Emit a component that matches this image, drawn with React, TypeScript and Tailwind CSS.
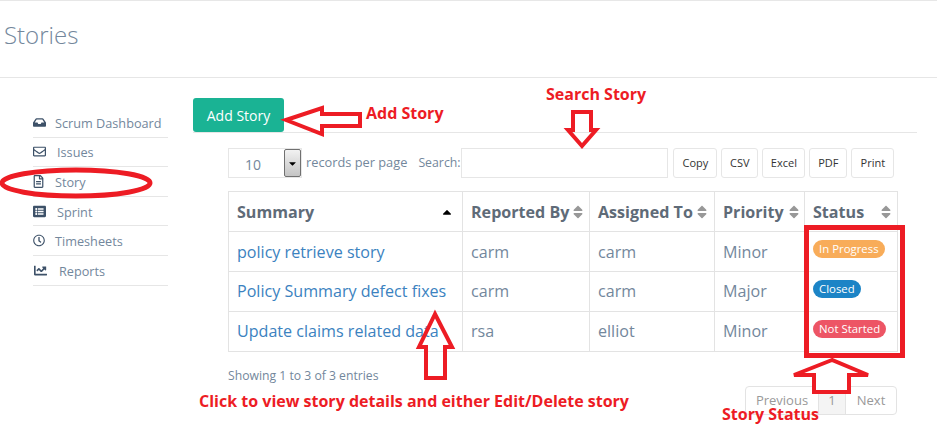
import { FaInbox, FaRegEnvelope, FaRegFileAlt, FaListAlt, FaRegClock, FaChartLine, FaSort, FaCaretUp, FaCaretDown } from 'react-icons/fa'

const NAV = [
  { icon: FaInbox, label: 'Scrum Dashboard', gap: 'ml-[9px]', size: 'w-[13px]' },
  { icon: FaRegEnvelope, label: 'Issues', gap: 'ml-[11px]', size: 'w-[13px]' },
  { icon: FaRegFileAlt, label: 'Story', gap: 'ml-[11px]', size: 'w-[11px]' },
  { icon: FaListAlt, label: 'Sprint', gap: 'ml-[11px]', size: 'w-[13px]' },
  { icon: FaRegClock, label: 'Timesheets', gap: 'ml-[10px]', size: 'w-[12px]' },
  { icon: FaChartLine, label: 'Reports', gap: 'ml-[11px]', size: 'w-[15px]' },
]

const ROWS = [
  { summary: 'policy retrieve story', by: 'carm', to: 'carm', priority: 'Minor', status: 'In Progress', color: 'bg-[#f8ac59]', pad: 'pt-[2px]' },
  { summary: 'Policy Summary defect fixes', by: 'carm', to: 'carm', priority: 'Major', status: 'Closed', color: 'bg-[#1c84c6]', pad: 'pb-0' },
  { summary: 'Update claims related data', by: 'rsa', to: 'elliot', priority: 'Minor', status: 'Not Started', color: 'bg-[#ed5565]', pad: 'pb-0' },
]

const EXPORTS = [
  { label: 'Copy', width: 'w-[44px]' },
  { label: 'CSV', width: 'w-[37px]' },
  { label: 'Excel', width: 'w-[43px]' },
  { label: 'PDF', width: 'w-[38px]' },
  { label: 'Print', width: 'w-[43px]' },
]

function SortHead({ label, width, pad }: { label: string; width: string; pad: string }) {
  return (
    <th className={`${width} border border-[#e3e3e3] pl-[8px] pt-[2px] ${pad} text-left font-bold`}>
      <div className="flex items-center justify-between">
        <span>{label}</span>
        <FaSort className="text-[16px] text-[#989898]" />
      </div>
    </th>
  )
}

export default function App() {
  return (
    <div className="relative h-[436px] w-[937px] overflow-hidden border-t border-[#e7e7e7] bg-white font-['Open_Sans',sans-serif] text-[#73879c]">
      <header className="flex h-[77px] items-center border-b border-[#e6e6e6] pb-[9px] pl-[4px]">
        <h1 className="text-[24px] font-light text-[#73879c]">Stories</h1>
      </header>

      <div className="flex">
        <nav className="ml-[33px] mt-[30px] w-[135px] text-[12.7px]">
          {NAV.map((item) => (
            <div key={item.label} className="flex h-[29.6px] items-center border-b border-[#e6e6e6]">
              <item.icon className={`${item.size} shrink-0 text-[13px] text-[#3d5168]`} />
              <span className={`${item.gap} whitespace-nowrap pt-[2px]`}>{item.label}</span>
            </div>
          ))}
        </nav>

        <main className="ml-[25px] mt-[20px] w-[724px]">
          <div className="border-b border-[#e6e6e6]">
            <button className="block h-[34px] w-[91px] rounded-[3px] bg-[#1ab394] text-[14px] text-white">Add Story</button>
          </div>

          <div className="ml-[35px] mt-[15px] flex h-[30px] items-center text-[12.8px]">
            <div className="flex h-[30px] w-[74px] items-center justify-between border border-[#e6e6e6] pl-[16px]">
              <span className="pt-[3px] text-[14px]">10</span>
              <span className="flex h-[28px] w-[17px] items-center justify-center rounded-[2px] border border-[#707070] bg-gradient-to-b from-[#f2f2f2] to-[#c4c4c4]">
                <FaCaretDown className="text-[11px] text-black" />
              </span>
            </div>
            <span className="ml-[4px] whitespace-nowrap">records per page</span>
            <span className="ml-[11px] w-[43px] text-[12.3px]">Search:</span>
            <input className="h-[30px] w-[207px] border border-[#e6e6e6] outline-none" />
            <div className="ml-[5px] flex gap-[4px]">
              {EXPORTS.map((b) => (
                <button key={b.label} className={`${b.width} h-[30px] rounded-[3px] border border-[#e6e6e6] bg-white text-[11px] text-[#333]`}>
                  {b.label}
                </button>
              ))}
            </div>
          </div>

          <table className="ml-[35px] mt-[13px] w-[670px] table-fixed border-collapse text-[16.1px]">
            <thead>
              <tr className="h-[40px] text-[#5f6b78]">
                <th className="w-[234px] border border-[#e3e3e3] pl-[8px] pr-[8px] pt-[2px] text-left font-bold">
                  <div className="flex items-center justify-between">
                    <span>Summary</span>
                    <FaCaretUp className="text-[14px] text-black" />
                  </div>
                </th>
                <SortHead label="Reported By" width="w-[127px]" pad="pr-[3px]" />
                <SortHead label="Assigned To" width="w-[125px]" pad="pr-[4px]" />
                <SortHead label="Priority" width="w-[90px]" pad="pr-[2px]" />
                <SortHead label="Status" width="w-[93px]" pad="pr-[3px]" />
              </tr>
            </thead>
            <tbody>
              {ROWS.map((row) => (
                <tr key={row.summary} className="h-[40px]">
                  <td className={`${row.pad} whitespace-nowrap border border-[#e3e3e3] pl-[8px] text-[#3b82c0]`}>{row.summary}</td>
                  <td className={`${row.pad} border border-[#e3e3e3] pl-[8px]`}>{row.by}</td>
                  <td className={`${row.pad} border border-[#e3e3e3] pl-[8px]`}>{row.to}</td>
                  <td className={`${row.pad} border border-[#e3e3e3] pl-[8px]`}>{row.priority}</td>
                  <td className="border border-[#e3e3e3] pl-[8px]">
                    <span className={`${row.color} mb-[10px] inline-block h-[18px] rounded-full px-[6px] text-[11.4px] leading-[18px] text-white`}>{row.status}</span>
                  </td>
                </tr>
              ))}
            </tbody>
          </table>

          <div className="ml-[35px] flex items-start justify-between">
            <p className="mt-[15px] text-[12.2px]">Showing 1 to 3 of 3 entries</p>
            <div className="mr-[20px] mt-[34px] flex h-[29px] rounded-[4px] border border-[#e3e3e3] text-[13px] text-[#999]">
              <span className="flex w-[72px] items-center justify-center">Previous</span>
              <span className="flex w-[28px] items-center justify-center border-x border-[#e3e3e3] bg-[#f4f4f4]">1</span>
              <span className="flex w-[50px] items-center justify-center">Next</span>
            </div>
          </div>
        </main>
      </div>

      {/* Red annotations drawn over the page */}
      <svg className="absolute left-0 top-[-1px]" width="937" height="436" fill="none" stroke="#ed1c24">
        <ellipse cx="76" cy="183" rx="74" ry="13" strokeWidth="5" />
        <polygon points="286,120 322,108 322,114 360,114 360,126 322,126 322,134" strokeWidth="4" fill="white" />
        <polygon points="573,112 591,112 591,130 596,130 582,146 568,130 573,130" strokeWidth="4" />
        <polygon points="435,314 419,347 426,347 426,378 445,378 445,347 452,347" strokeWidth="4" />
        <rect x="806.5" y="227.5" width="96" height="128" strokeWidth="5" />
        <polygon points="832,360 794,375 814,375 814,392 849,392 849,375 868,375" strokeWidth="4" fill="white" />
      </svg>
      <div className="absolute left-[366px] top-[100px] text-[16px] font-bold text-[#ed1c24]">Add Story</div>
      <div className="absolute left-[546px] top-[81px] text-[16px] font-bold text-[#ed1c24]">Search Story</div>
      <div className="absolute left-[199px] top-[388px] whitespace-nowrap text-[16px] font-bold text-[#ed1c24]">Click to view story details and either Edit/Delete story</div>
      <div className="absolute left-[722px] top-[401px] text-[16px] font-bold text-[#ed1c24]">Story Status</div>
    </div>
  )
}
